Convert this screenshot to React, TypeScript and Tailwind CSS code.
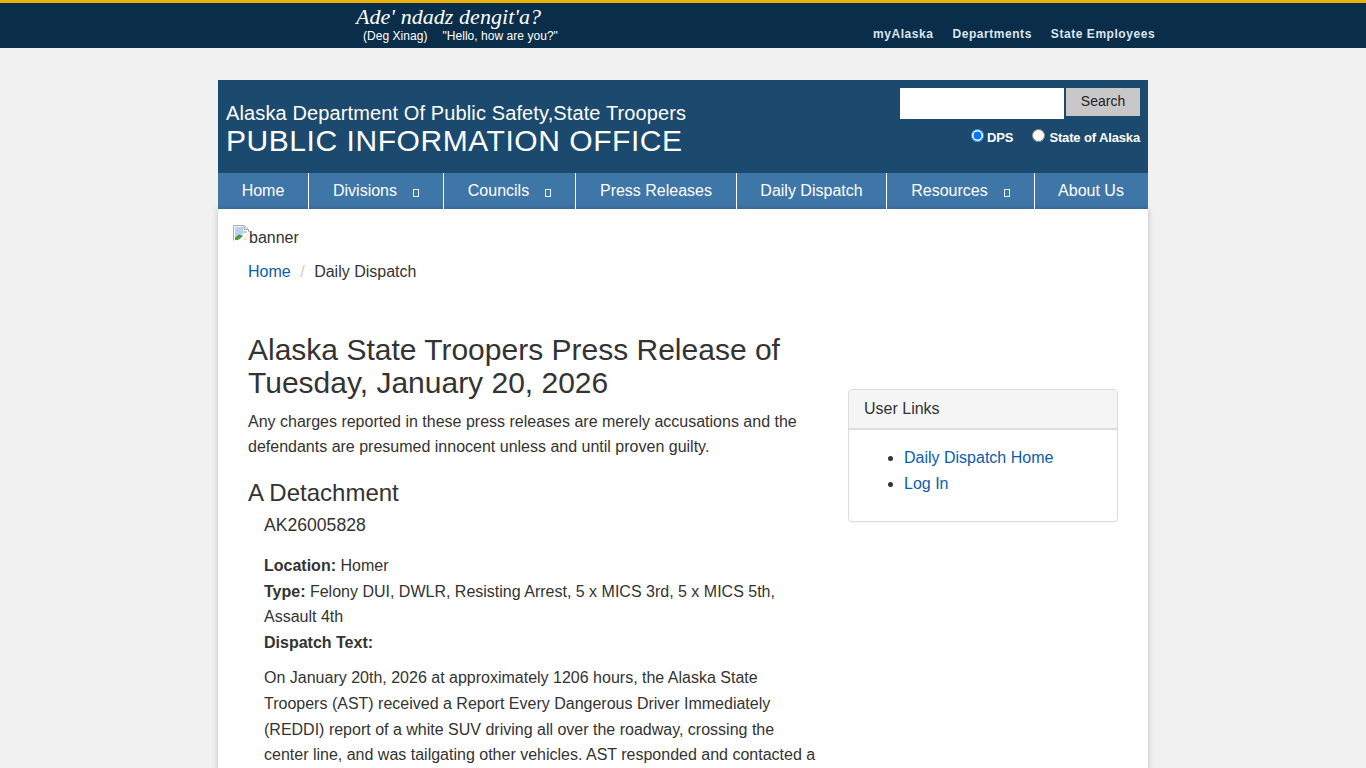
import React from "react";

function Sq() {
  return <span className="ml-[16px] mt-[5px] inline-block h-[8px] w-[6px] border border-white/90" />;
}

function Broken() {
  return (
    <svg width="16" height="16" viewBox="0 0 16 16" className="inline-block shrink-0 self-start">
      <path d="M0.5 15.5V0.5H11L15.5 4.5V7" fill="#fff" stroke="#a9a9a9" />
      <path d="M11 0.5V4.5H15.5" fill="#dcdcdc" stroke="#a9a9a9" />
      <path d="M2 2H10V6H14V8L10 8.5L5 11L2 12Z" fill="#bcd0ee" />
      <path d="M2 15V12.5L6 9.5L10 10.5L8 13L5 15Z" fill="#4e9a3c" />
      <path d="M10 15L12 12.5L15.5 15.5Z" fill="#dfe6d8" />
    </svg>
  );
}

const nav: [string, number, boolean][] = [
  ["Home", 91, false],
  ["Divisions", 135, true],
  ["Councils", 132, true],
  ["Press Releases", 161, false],
  ["Daily Dispatch", 150, false],
  ["Resources", 148, true],
  ["About Us", 113, false],
];

export default function App() {
  return (
    <div
      className="h-[768px] overflow-hidden bg-[#f1f1f1] text-[16px] leading-[25.6px] text-[#333333]"
      style={{ fontFamily: '"Liberation Sans", Arial, sans-serif' }}
    >
      <header className="h-[48px] border-t-[3px] border-[#ecb30f] bg-[#0a2e4a]">
        <div className="relative mx-auto h-[45px] w-[1366px]">
          <div className="absolute left-[356px] top-[1px] text-white">
            <div
              className="text-[22px] italic leading-[26px] tracking-[0.05px]"
              style={{ fontFamily: '"Liberation Serif", serif' }}
            >
              Ade' ndadz dengit'a?
            </div>
            <div className="ml-[7px] mt-[-1px] flex gap-[15px] text-[12px] leading-[14px] tracking-[0.04px]">
              <span>(Deg Xinag)</span>
              <span>"Hello, how are you?"</span>
            </div>
          </div>
          <nav className="absolute left-[873px] top-[23px] flex gap-[19px] text-[12px] font-bold leading-[16px] tracking-[0.55px] text-[#dbe5ee]">
            <span>myAlaska</span>
            <span>Departments</span>
            <span>State Employees</span>
          </nav>
        </div>
      </header>

      <div className="mx-auto mt-[32px] w-[930px]">
        <div className="flex h-[93px] justify-between bg-[#1b4a6e] px-[8px] text-white">
          <div className="pt-[20px]">
            <div className="text-[20px] leading-[26px] tracking-[0.12px]">
              Alaska Department Of Public Safety,State Troopers
            </div>
            <div className="mt-[-2px] text-[30px] leading-[34px] tracking-[0.55px]">
              PUBLIC INFORMATION OFFICE
            </div>
          </div>
          <div className="flex flex-col items-end pt-[8px]">
            <div className="flex gap-[2px]">
              <div className="h-[31px] w-[164px] bg-white" />
              <button className="h-[28px] w-[74px] bg-[#c8c8c8] text-[14px] text-[#222222]">Search</button>
            </div>
            <div className="mt-[7px] flex items-center text-[13px] font-bold leading-[24px] tracking-[-0.14px]">
              <input type="radio" name="scope" defaultChecked className="m-0 mb-[6px] h-[13px] w-[13px]" />
              <span className="ml-[3px]">DPS</span>
              <input type="radio" name="scope" className="m-0 mb-[6px] ml-[19px] h-[13px] w-[13px]" />
              <span className="ml-[4px]">State of Alaska</span>
            </div>
          </div>
        </div>

        <nav className="flex h-[36px] bg-[#3f76a8] text-white">
          {nav.map(([label, w, drop], i) => (
            <div
              key={label}
              className={`flex h-[36px] items-center justify-center pb-[1px] ${i < nav.length - 1 ? "border-r border-white" : "pr-[1px]"}`}
              style={{ width: w }}
            >
              <span>{label}</span>
              {drop && <Sq />}
            </div>
          ))}
        </nav>

        <main className="h-[600px] bg-white px-[15px] pt-[16px] shadow-[0_0_6px_rgba(0,0,0,0.22)]">
          <div className="flex h-[25px] items-start leading-[25px]">
            <Broken />
            <span>banner</span>
          </div>
          <div className="ml-[15px] mt-[9px] flex">
            <a className="text-[#0b5cad]">Home</a>
            <span className="mx-[9.5px] text-[#cccccc]">/</span>
            <span>Daily Dispatch</span>
          </div>

          <div className="flex">
            <article className="ml-[15px] w-[570px]">
              <h1 className="mt-[48px] text-[30px] leading-[33px]">
                Alaska State Troopers Press Release of Tuesday, January 20, 2026
              </h1>
              <p className="mt-[10px] leading-[25px]">
                Any charges reported in these press releases are merely accusations and the defendants are presumed innocent unless and until proven guilty.
              </p>
              <h2 className="mt-[21px] text-[24px] leading-[26px]">A Detachment</h2>
              <div className="pl-[16px]">
                <h3 className="mt-[9px] text-[17.6px] leading-[20px]">AK26005828</h3>
                <div className="mt-[18.4px]">
                  <div><b>Location:</b> Homer</div>
                  <div><b>Type:</b> Felony DUI, DWLR, Resisting Arrest, 5 x MICS 3rd, 5 x MICS 5th, Assault 4th</div>
                  <div><b>Dispatch Text:</b></div>
                </div>
                <p className="mt-[10px]">
                  On January 20th, 2026 at approximately 1206 hours, the Alaska State Troopers (AST) received a Report Every Dangerous Driver Immediately (REDDI) report of a white SUV driving all over the roadway, crossing the center line, and was tailgating other vehicles. AST responded and contacted a
                </p>
              </div>
            </article>
            <aside className="ml-[30px] mt-[104px] h-[133px] w-[270px] rounded-[4px] border border-[#dddddd] shadow-[0_1px_1px_rgba(0,0,0,0.05)]">
              <div className="h-[40px] rounded-t-[4px] border-b-2 border-[#dddddd] bg-[#f5f5f5] px-[15px] pt-[6px]">User Links</div>
              <ul className="mt-[15px] list-disc pl-[55px] text-[#0b5cad] marker:text-[#333333]">
                <li className="leading-[26px]">Daily Dispatch Home</li>
                <li className="leading-[26px]">Log In</li>
              </ul>
            </aside>
          </div>
        </main>
      </div>
    </div>
  );
}
